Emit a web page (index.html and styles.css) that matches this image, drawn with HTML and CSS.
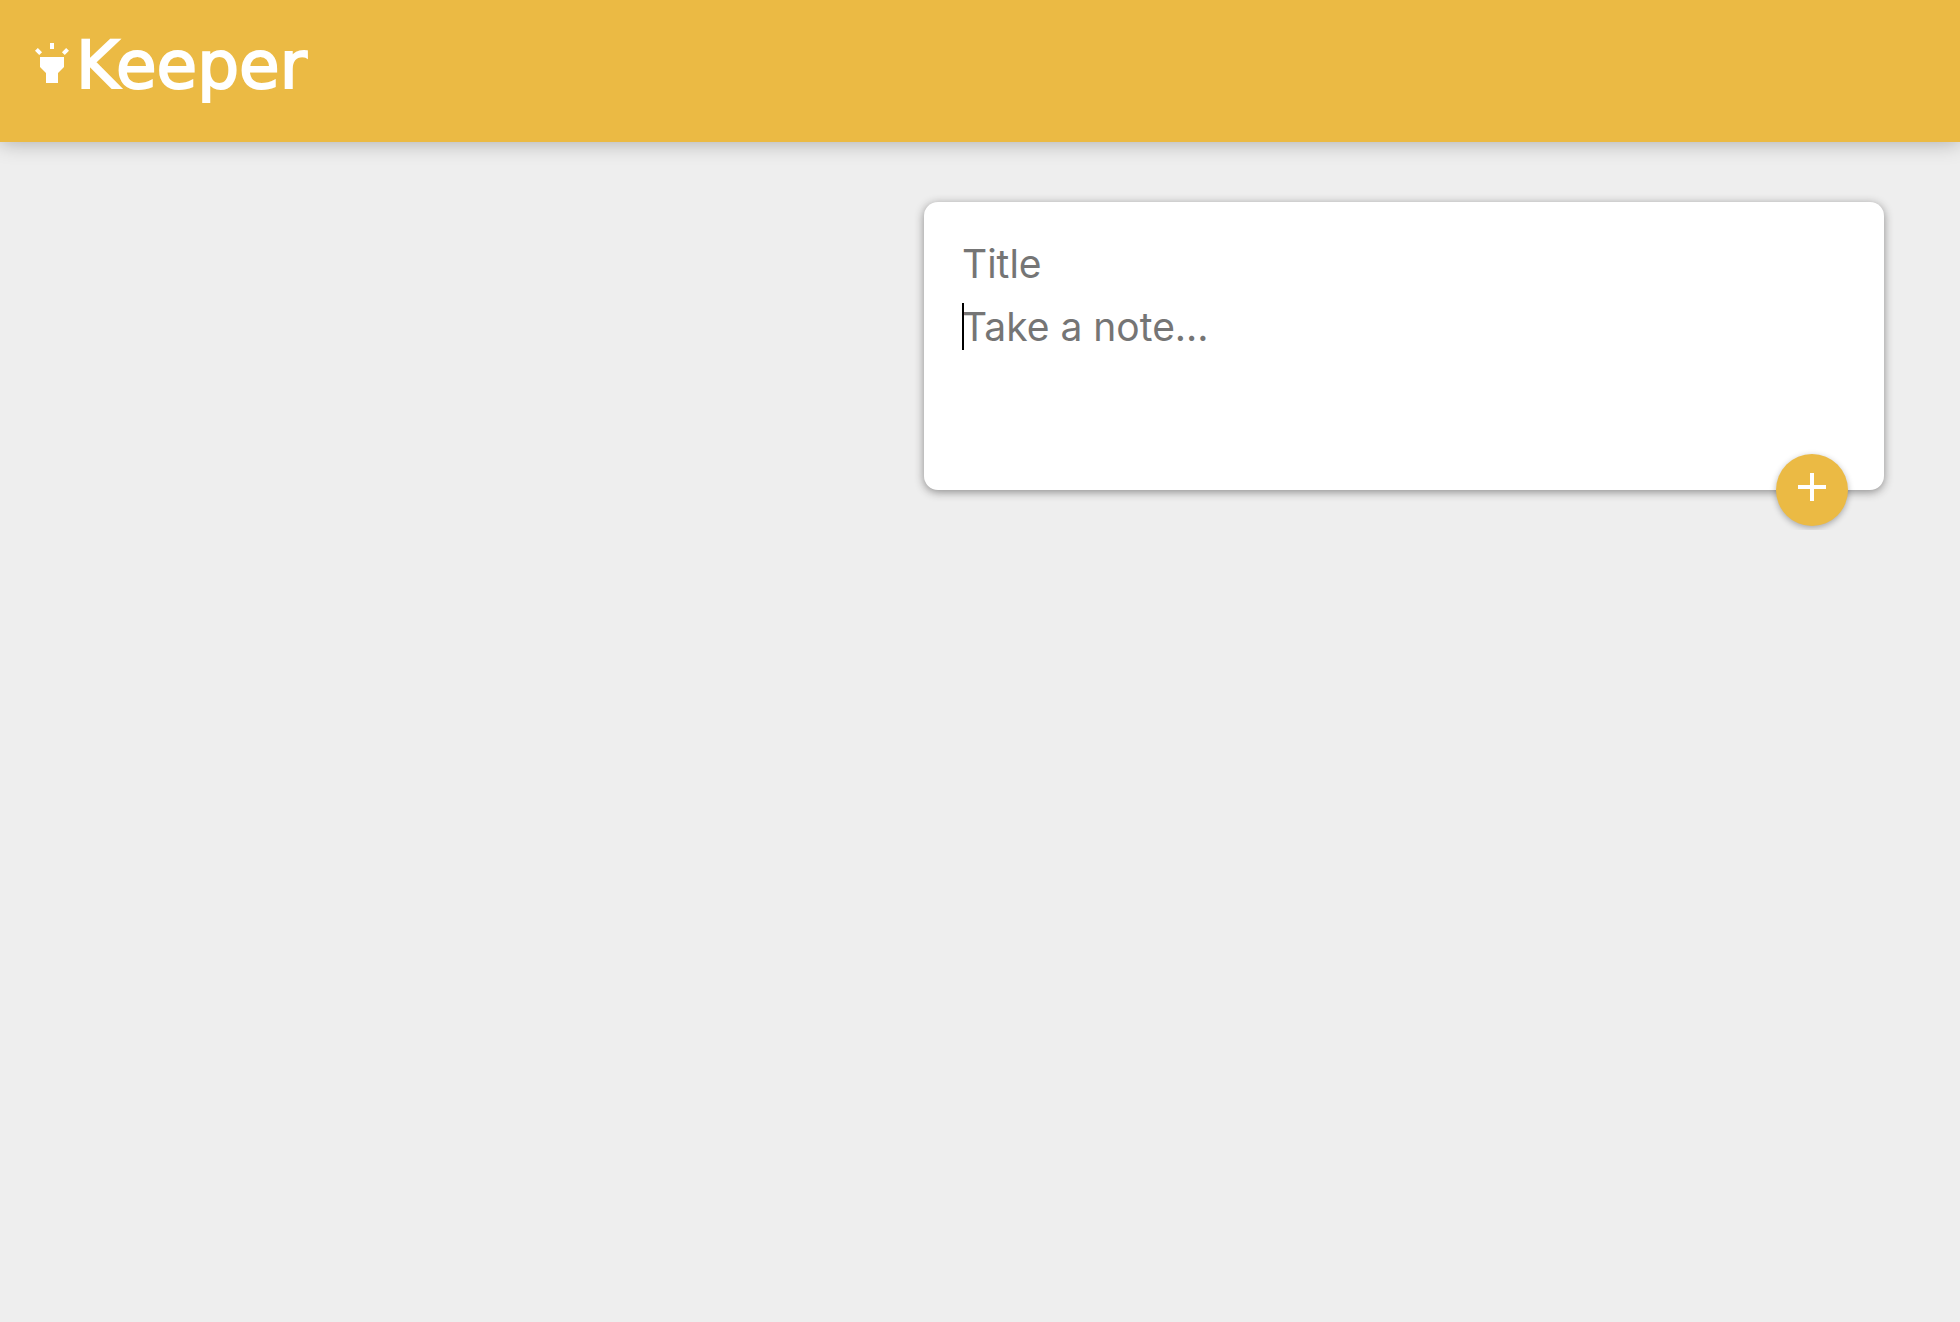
FILE: index.html
```html
<!DOCTYPE html>
<html lang="en">
<head>
  <meta charset="utf-8">
  <title>Keeper</title>
  <link rel="stylesheet" href="styles.css">
</head>
<body>
  <header class="header">
    <h1 class="brand">
      <svg class="icon" viewBox="0 0 24 24" aria-hidden="true"><path d="M6 14l3 3v5h6v-5l3-3V9H6zm5-12h2v3h-2zM3.5 5.875L4.914 4.46l2.12 2.122L5.62 7.997zm13.46.71l2.123-2.12 1.414 1.414L18.375 8z"/></svg>
      <span class="name">Keeper</span>
    </h1>
  </header>
  <main class="main">
    <form class="note">
      <input class="field" name="title" placeholder="Title" aria-label="Title">
      <div class="content">
        <textarea class="field area" name="content" rows="3" placeholder="Take a note..." aria-label="Note"></textarea>
        <span class="caret"></span>
      </div>
      <button class="add" type="button" aria-label="Add note">
        <svg class="icon" viewBox="0 0 24 24" aria-hidden="true"><path d="M19 13h-6v6h-2v-6H5v-2h6V5h2v6h6v2z"/></svg>
      </button>
    </form>
  </main>
</body>
</html>
```
FILE: styles.css
```css
* {
  box-sizing: border-box;
}

body {
  margin: 0;
  background: #eeeeee;
  font-family: Inter, "Liberation Sans", sans-serif;
}

.header {
  padding: 26px 28px 36px;
  background: #ebba44;
  box-shadow: 0 0 20px rgba(0, 0, 0, 0.3);
}

.brand {
  display: flex;
  align-items: center;
  margin: 0;
  color: #fff;
  font: 400 66px/80px "DejaVu Sans", sans-serif;
}

.brand .icon {
  margin-bottom: 6px;
}

.name {
  -webkit-text-stroke: 2px #fff;
}

.icon {
  display: block;
  flex: none;
  width: 48px;
  height: 48px;
  fill: #fff;
}

.main {
  display: flex;
  justify-content: flex-end;
  padding: 60px 76px 40px;
}

.note {
  position: relative;
  width: 100%;
  max-width: 960px;
  padding: 30px;
  background: #fff;
  border-radius: 14px;
  box-shadow: 0 2px 10px #8a8989;
}

.field {
  display: block;
  width: 100%;
  height: 63px;
  padding: 8px;
  border: 0;
  outline: 0;
  background: transparent;
  color: #222;
  font: 400 39px/47px Inter, "Liberation Sans", sans-serif;
  resize: none;
}

.field::placeholder {
  color: #757575;
  opacity: 1;
}

.content {
  position: relative;
}

.area {
  height: 165px;
  overflow: hidden;
}

.caret {
  position: absolute;
  top: 8px;
  left: 8px;
  width: 2px;
  height: 47px;
  background: #000;
}

.add {
  position: absolute;
  right: 36px;
  bottom: -36px;
  display: grid;
  place-items: center;
  width: 72px;
  height: 72px;
  padding: 0 0 6px;
  border: 0;
  border-radius: 50%;
  background: #ebba44;
  box-shadow: 0 2px 6px rgba(0, 0, 0, 0.3);
}
```
